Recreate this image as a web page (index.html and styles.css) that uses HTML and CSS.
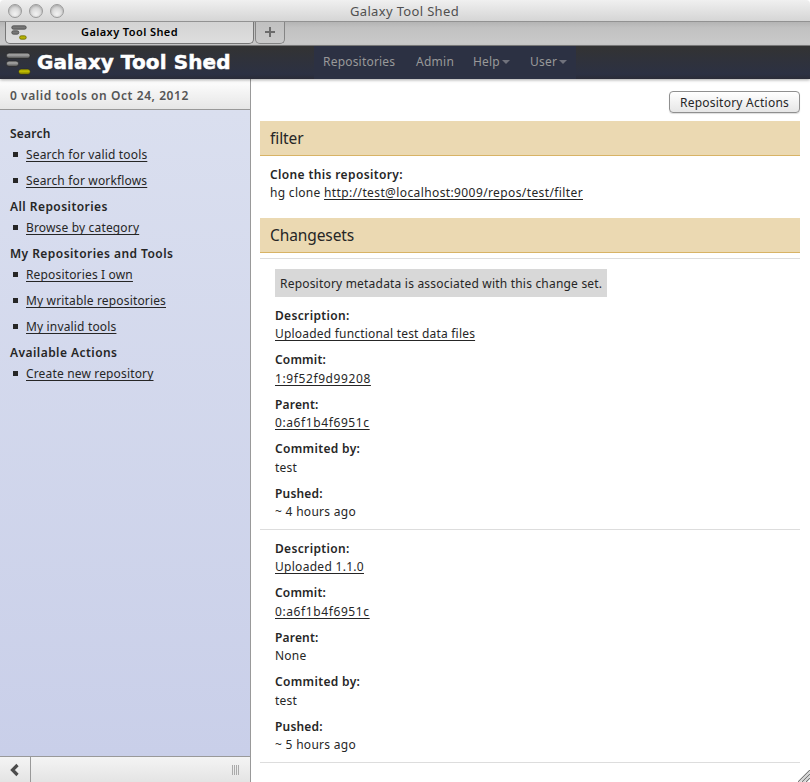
FILE: index.html
```html
<!DOCTYPE html>
<html lang="en">
<head>
<meta charset="utf-8">
<title>Galaxy Tool Shed</title>
<link rel="stylesheet" href="styles.css">
</head>
<body>
<svg class="defs" width="0" height="0">
  <defs>
    <linearGradient id="grey" x1="0" y1="0" x2="0" y2="1"><stop offset="0" stop-color="#777"/><stop offset=".35" stop-color="#a6a6a6"/><stop offset="1" stop-color="#4c4c4c"/></linearGradient>
    <linearGradient id="gold" x1="0" y1="0" x2="0" y2="1"><stop offset="0" stop-color="#8c8900"/><stop offset=".4" stop-color="#c8c400"/><stop offset="1" stop-color="#737000"/></linearGradient>
    <symbol id="logo" viewBox="0 0 25 24">
      <rect x=".5" y="1" width="23.5" height="5.5" rx="2.7" fill="url(#grey)" stroke="#222" stroke-opacity=".6" stroke-width=".9"/>
      <rect x=".5" y="9" width="12" height="5.5" rx="2.7" fill="url(#grey)" stroke="#222" stroke-opacity=".6" stroke-width=".9"/>
      <rect x="12.7" y="17" width="11.5" height="5.5" rx="2.5" fill="url(#gold)" stroke="#222" stroke-opacity=".6" stroke-width=".9"/>
    </symbol>
  </defs>
</svg>
<div class="window">
  <header class="titlebar">
    <div class="lights"><i></i><i></i><i></i></div>
    <span class="window-title">Galaxy Tool Shed</span>
  </header>
  <div class="tabbar">
    <div class="tab"><svg class="favicon" viewBox="0 0 16 15">
      <rect x=".8" y=".8" width="14.4" height="3.4" rx="1.6" fill="#777" stroke="#484848" stroke-width=".8"/>
      <rect x=".8" y="5.8" width="7" height="3.4" rx="1.6" fill="#777" stroke="#484848" stroke-width=".8"/>
      <rect x="8.6" y="10.8" width="6.6" height="3.4" rx="1.6" fill="#b5b100" stroke="#6b6900" stroke-width=".8"/>
    </svg><span>Galaxy Tool Shed</span></div>
    <div class="new-tab"><svg width="12" height="12"><path d="M6 1v10M1 6h10" stroke="#6c6c6c" stroke-width="2"/></svg></div>
  </div>
  <div class="masthead">
    <svg class="logo"><use href="#logo"/></svg>
    <span class="brand">Galaxy Tool Shed</span>
    <nav class="menu">
      <a class="repos">Repositories</a><a class="admin">Admin</a><a class="help">Help<b class="caret"></b></a><a class="user">User<b class="caret"></b></a>
    </nav>
  </div>
  <div class="columns">
    <aside class="sidebar">
      <div class="panel-header">0 valid tools on Oct 24, 2012</div>
      <div class="panel-body">
        <h3 class="first">Search</h3>
        <ul><li><a>Search for valid tools</a></li><li><a>Search for workflows</a></li></ul>
        <h3>All Repositories</h3>
        <ul><li><a>Browse by category</a></li></ul>
        <h3>My Repositories and Tools</h3>
        <ul><li><a>Repositories I own</a></li><li><a>My writable repositories</a></li><li><a>My invalid tools</a></li></ul>
        <h3>Available Actions</h3>
        <ul><li><a>Create new repository</a></li></ul>
      </div>
      <div class="panel-footer">
        <div class="collapse"><svg width="11" height="14"><path d="M8.5 2 3.5 7l5 5" fill="none" stroke="#4c4c4c" stroke-width="3.2"/></svg></div>
        <div class="grip"></div>
      </div>
    </aside>
    <main class="content">
      <div class="actions"><button>Repository Actions</button></div>
      <h2 class="band">filter</h2>
      <div class="clone">
        <strong>Clone this repository:</strong>
        <div><span class="cmd">hg clone </span><a class="url">http://test@localhost:9009/repos/test/filter</a></div>
      </div>
      <h2 class="band">Changesets</h2>
      <section class="changeset spaced">
        <div class="notice">Repository metadata is associated with this change set.</div>
        <dl><dt>Description:</dt><dd><a>Uploaded functional test data files</a></dd></dl>
        <dl><dt class="short">Commit:</dt><dd><a class="hash">1:9f52f9d99208</a></dd></dl>
        <dl><dt class="short">Parent:</dt><dd><a class="hash">0:a6f1b4f6951c</a></dd></dl>
        <dl><dt>Commited by:</dt><dd>test</dd></dl>
        <dl><dt class="short">Pushed:</dt><dd class="ago">~ 4 hours ago</dd></dl>
      </section>
      <section class="changeset last">
        <dl><dt>Description:</dt><dd class="ago"><a>Uploaded 1.1.0</a></dd></dl>
        <dl><dt class="short">Commit:</dt><dd><a class="hash">0:a6f1b4f6951c</a></dd></dl>
        <dl><dt class="short">Parent:</dt><dd>None</dd></dl>
        <dl><dt>Commited by:</dt><dd>test</dd></dl>
        <dl><dt class="short">Pushed:</dt><dd class="ago">~ 5 hours ago</dd></dl>
      </section>
      <svg class="resizer" width="12" height="12"><path d="M0 12 12 0M4 12l8-8M8 12l4-4" stroke="#777" stroke-width="1.1"/><path d="M1.8 12 12 1.8M5.8 12 12 5.8" stroke="#ccc"/></svg>
    </main>
  </div>
</div>
</body>
</html>
```
FILE: styles.css
```css
* { box-sizing: border-box; }
body { margin: 0; background: #fff; color: #262626; font: 12px/18.5px "Noto Sans", sans-serif; letter-spacing: .2px; }
h2, h3, ul, dl, dd { margin: 0; padding: 0; }
.defs { position: absolute; }
.window { width: 810px; height: 782px; display: flex; flex-direction: column; overflow: hidden; }

.titlebar { height: 22px; display: grid; grid-template-columns: 1fr auto 1fr; align-items: center; background: linear-gradient(#f0f0f0, #d5d5d5); border-bottom: 1px solid #929292; border-radius: 4px 4px 0 0; }
.lights { display: flex; gap: 7px; padding-left: 8px; }
.lights i { width: 14px; height: 14px; border-radius: 50%; border: 1px solid #9a9a9a; background: radial-gradient(circle at 50% 75%, #f2f2f2, #cfcfcf 75%); box-shadow: inset 0 1px 2px #aaa; }
.window-title { font-size: 13px; letter-spacing: .34px; color: #505050; padding-top: 2px; margin-right: 1px; }

.tabbar { height: 24px; display: flex; padding-left: 5px; background: linear-gradient(#b4b4b4, #c1c1c1 25%, #c8c8c8 88%); border-bottom: 1px solid #7f7f7f; }
.tab { width: 249px; height: 22px; position: relative; display: flex; align-items: center; justify-content: center; background: linear-gradient(#d3d3d3, #dedede); border: 1.5px solid #777; border-top: 0; border-radius: 0 0 5px 5px; font-size: 11px; font-weight: 600; color: #000; letter-spacing: .41px; line-height: 18px; padding-bottom: 2px; }
.favicon { position: absolute; left: 5px; top: 3px; width: 16px; height: 15px; }
.new-tab { width: 30px; height: 22px; margin-left: 1px; padding-bottom: 2px; display: flex; align-items: center; justify-content: center; background: linear-gradient(#c0c0c0, #cacaca); border: 1.5px solid #858585; border-top: 0; border-radius: 0 0 5px 5px; }

.masthead { height: 33px; flex: none; display: flex; align-items: center; background: linear-gradient(#333, #2c3143 85%, #2a2c38); box-shadow: 0 1px 3px rgba(0,0,0,.35); z-index: 1; }
.logo { width: 25px; height: 24px; flex: none; margin-left: 6px; margin-top: 2px; }
.brand { width: 283px; flex: none; padding-left: 6px; font: 700 20px/30px "DejaVu Sans", sans-serif; color: #fff; letter-spacing: .1px; white-space: nowrap; padding-bottom: 1px; -webkit-text-stroke: .5px #fff; }
.menu { width: 262px; height: 33px; display: flex; background: #2c3143; color: #999; line-height: 32px; padding-left: 9px; }
.repos { width: 93px; }
.admin { width: 57px; letter-spacing: .26px; }
.help { width: 57px; }
.caret { display: inline-block; margin-left: 2px; vertical-align: 2px; border: 4px solid transparent; border-top: 4px solid #70727c; border-bottom: 0; }

.columns { flex: 1; display: flex; min-height: 0; }
.sidebar { width: 251px; display: flex; flex-direction: column; border-right: 1px solid #999; }
.panel-header { height: 31px; padding-left: 10px; line-height: 33px; font-weight: 600; color: #555; letter-spacing: .57px; background: linear-gradient(#fff, #e6e6e6); border-bottom: 1px solid #999; }
.panel-body { flex: 1; padding: 16px 10px; background: linear-gradient(#dadfef, #c9cfe9); }
h3 { height: 16px; margin-top: 5px; font-size: 12px; line-height: 16px; font-weight: 600; letter-spacing: .45px; }
h3.first { margin-top: 0; letter-spacing: .2px; }
ul { list-style: none; }
li { height: 26px; line-height: 26px; display: flex; align-items: center; letter-spacing: .16px; }
li::before { content: ""; width: 5px; height: 5px; margin: 0 8px 1px 3px; background: #262626; }
a { color: inherit; }
li a, .url, dd a { text-decoration: underline; text-decoration-thickness: 1px; text-underline-offset: 2px; text-decoration-skip-ink: none; }
.panel-footer { height: 26px; display: flex; justify-content: space-between; border-top: 1px solid #999; background: linear-gradient(#f4f4f4, #e4e4e4); }
.collapse { width: 31px; border-right: 1px solid #999; padding: 6px 0 0 9px; line-height: 0; }
.grip { width: 7px; height: 10px; margin: 8px 11px 0 0; background: repeating-linear-gradient(90deg, #aaa 0 1px, transparent 1px 2px); }

.content { flex: 1; position: relative; padding: 12px 10px 0 9px; }
.actions { height: 30px; display: flex; justify-content: flex-end; }
button { width: 131px; height: 22px; padding: 2px 0 0; font: inherit; line-height: 18px; letter-spacing: .24px; color: #262626; border: 1px solid #8f8f8f; border-radius: 4px; background: linear-gradient(#fff, #e6e6e6); box-shadow: 0 1px 1px #ddd; }
.band { height: 35px; padding-left: 10px; background: #ebd9b2; border-bottom: 1px solid #d8b365; font-size: 15.5px; line-height: 35px; font-weight: 400; letter-spacing: -.1px; }
.clone { height: 62px; padding: 9.5px 10px 0; }
strong { display: block; font-weight: 600; letter-spacing: .37px; }
.cmd { letter-spacing: .3px; white-space: pre; }
.url { letter-spacing: .39px; }
.changeset { border-top: 1px solid #ddd; padding: 9.5px 15px 7.5px; }
.spaced { margin-top: 5px; padding-top: 10px; }
.last { border-bottom: 1px solid #ddd; }
.notice { width: 332px; height: 28px; margin-bottom: 9.5px; padding-left: 5px; line-height: 30px; background: #d8d8d8; white-space: nowrap; }
dl + dl { margin-top: 7.5px; }
dt { font-weight: 600; letter-spacing: .34px; }
.short { letter-spacing: .18px; }
.ago { letter-spacing: .29px; }
.hash { letter-spacing: .6px; }
.resizer { position: absolute; right: 0; bottom: 0; }
```
